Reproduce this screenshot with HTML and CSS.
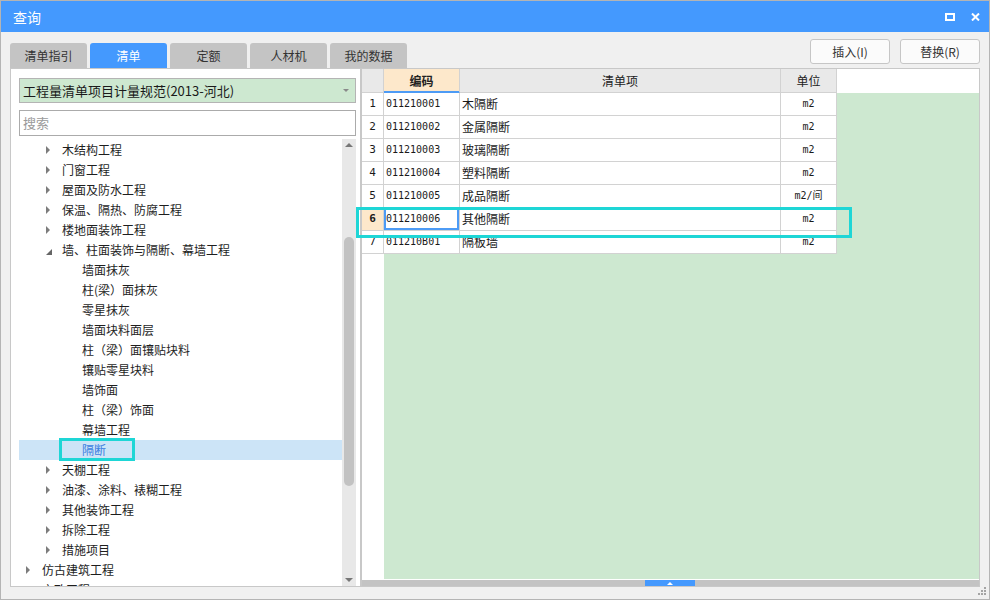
FILE: index.html
```html
<!DOCTYPE html>
<html lang="zh-CN">
<head>
<meta charset="utf-8">
<title>查询</title>
<link rel="stylesheet" href="styles.css">
</head>
<body>
<div class="window">
  <div class="titlebar">
    <span class="title">查询</span>
    <div class="title-icons">
      <svg width="10" height="8" viewBox="0 0 10 8"><rect x="1" y="1" width="8" height="6" fill="none" stroke="#fff" stroke-width="2"/></svg>
      <svg width="9" height="8" viewBox="0 0 9 8"><path d="M1 0.5L8 7.5M8 0.5L1 7.5" stroke="#fff" stroke-width="2"/></svg>
    </div>
  </div>
  <div class="content">
    <div class="toolbar">
      <div class="tabs">
        <div class="tab">清单指引</div>
        <div class="tab active">清单</div>
        <div class="tab">定额</div>
        <div class="tab">人材机</div>
        <div class="tab">我的数据</div>
      </div>
      <div class="actions">
        <button class="btn">插入(I)</button>
        <button class="btn">替换(R)</button>
      </div>
    </div>
    <div class="main">
      <div class="left-panel">
        <div class="select"><span>工程量清单项目计量规范(2013-河北)</span><i class="caret"></i></div>
        <div class="search">搜索</div>
        <div class="tree">
          <ul class="tree-list">
            <li class="node d1"><span class="arw"><i class="tri"></i></span><span>木结构工程</span></li>
            <li class="node d1"><span class="arw"><i class="tri"></i></span><span>门窗工程</span></li>
            <li class="node d1"><span class="arw"><i class="tri"></i></span><span>屋面及防水工程</span></li>
            <li class="node d1"><span class="arw"><i class="tri"></i></span><span>保温、隔热、防腐工程</span></li>
            <li class="node d1"><span class="arw"><i class="tri"></i></span><span>楼地面装饰工程</span></li>
            <li class="node d1"><span class="arw"><i class="tri open"></i></span><span>墙、柱面装饰与隔断、幕墙工程</span></li>
            <li class="node d2"><span class="arw"></span><span>墙面抹灰</span></li>
            <li class="node d2"><span class="arw"></span><span>柱(梁）面抹灰</span></li>
            <li class="node d2"><span class="arw"></span><span>零星抹灰</span></li>
            <li class="node d2"><span class="arw"></span><span>墙面块料面层</span></li>
            <li class="node d2"><span class="arw"></span><span>柱（梁）面镶贴块料</span></li>
            <li class="node d2"><span class="arw"></span><span>镶贴零星块料</span></li>
            <li class="node d2"><span class="arw"></span><span>墙饰面</span></li>
            <li class="node d2"><span class="arw"></span><span>柱（梁）饰面</span></li>
            <li class="node d2"><span class="arw"></span><span>幕墙工程</span></li>
            <li class="node d2 selected"><span class="arw"></span><span>隔断</span></li>
            <li class="node d1"><span class="arw"><i class="tri"></i></span><span>天棚工程</span></li>
            <li class="node d1"><span class="arw"><i class="tri"></i></span><span>油漆、涂料、裱糊工程</span></li>
            <li class="node d1"><span class="arw"><i class="tri"></i></span><span>其他装饰工程</span></li>
            <li class="node d1"><span class="arw"><i class="tri"></i></span><span>拆除工程</span></li>
            <li class="node d1"><span class="arw"><i class="tri"></i></span><span>措施项目</span></li>
            <li class="node d0"><span class="arw"><i class="tri"></i></span><span>仿古建筑工程</span></li>
            <li class="node d0"><span class="arw"><i class="tri"></i></span><span>市政工程</span></li>
          </ul>
          <div class="vscroll">
            <div class="sbtn"><i class="up"></i></div>
            <div class="thumb"></div>
            <div class="sbtn bottom"><i class="down"></i></div>
          </div>
        </div>
      </div>
      <div class="grid-panel">
        <div class="sheet">
          <div class="row head">
            <div class="c num"></div>
            <div class="c code">编码</div>
            <div class="c name">清单项</div>
            <div class="c unit">单位</div>
          </div>
          <div class="row"><div class="c num">1</div><div class="c code">011210001</div><div class="c name">木隔断</div><div class="c unit">m2</div></div>
          <div class="row"><div class="c num">2</div><div class="c code">011210002</div><div class="c name">金属隔断</div><div class="c unit">m2</div></div>
          <div class="row"><div class="c num">3</div><div class="c code">011210003</div><div class="c name">玻璃隔断</div><div class="c unit">m2</div></div>
          <div class="row"><div class="c num">4</div><div class="c code">011210004</div><div class="c name">塑料隔断</div><div class="c unit">m2</div></div>
          <div class="row"><div class="c num">5</div><div class="c code">011210005</div><div class="c name">成品隔断</div><div class="c unit">m2/间</div></div>
          <div class="row current"><div class="c num">6</div><div class="c code">011210006</div><div class="c name">其他隔断</div><div class="c unit">m2</div></div>
          <div class="row"><div class="c num">7</div><div class="c code">011210B01</div><div class="c name">隔板墙</div><div class="c unit">m2</div></div>
        </div>
        <div class="hscroll"><div class="hthumb"><i class="hup"></i></div></div>
      </div>
    </div>
    <div class="statusbar">
      <svg class="grip" width="8" height="8" viewBox="0 0 8 8">
        <rect x="6" y="0" width="2" height="2" fill="#a4a4a4"/>
        <rect x="3" y="3" width="2" height="2" fill="#a4a4a4"/>
        <rect x="6" y="3" width="2" height="2" fill="#a4a4a4"/>
        <rect x="0" y="6" width="2" height="2" fill="#a4a4a4"/>
        <rect x="3" y="6" width="2" height="2" fill="#a4a4a4"/>
        <rect x="6" y="6" width="2" height="2" fill="#a4a4a4"/>
      </svg>
    </div>
  </div>
  <div class="hl hl-tree"></div>
  <div class="hl hl-row"></div>
</div>
</body>
</html>
```

FILE: styles.css
```css
* { box-sizing: border-box; }
html, body { margin: 0; padding: 0; }
body {
  width: 990px;
  height: 600px;
  overflow: hidden;
  font-family: "Noto Sans CJK SC", sans-serif;
  font-size: 12px;
  color: #1e1e1e;
  background: #f0f0f0;
}
.window {
  position: relative;
  width: 990px;
  height: 600px;
  border: 1px solid #b4b4b4;
  background: #f0f0f0;
  display: flex;
  flex-direction: column;
}
.titlebar {
  height: 31px;
  flex: none;
  background: #4499fe;
  color: #fff;
  display: flex;
  align-items: center;
  justify-content: space-between;
  padding: 0 9px 0 12px;
}
.title { font-size: 14px; line-height: 20px; }
.title-icons { display: flex; align-items: center; gap: 16px; }
.title-icons svg { display: block; }

.content {
  flex: 1;
  display: flex;
  flex-direction: column;
  padding: 0 9px;
}
.toolbar {
  height: 36px;
  flex: none;
  display: flex;
  justify-content: space-between;
}
.tabs { display: flex; gap: 3px; align-self: flex-end; }
.tab {
  width: 77px;
  height: 25px;
  line-height: 25px;
  text-align: center;
  background: #c4c4c4;
  border-radius: 3px 3px 0 0;
  color: #333;
  font-size: 12px;
}
.tab.active { background: #4499fe; color: #fff; }
.actions { display: flex; gap: 10px; margin-top: 7px; align-self: flex-start; }
.btn {
  width: 80px;
  height: 25px;
  border: 1px solid #c6c6c6;
  border-radius: 3px;
  background: #fbfbfb;
  font-family: "Noto Sans CJK SC", sans-serif;
  font-size: 12px;
  line-height: 23px;
  color: #333;
  padding: 0;
}

.main { height: 519px; flex: none; display: flex; }

.left-panel {
  width: 351px;
  flex: none;
  border: 1px solid #c8c8c8;
  background: #fff;
  display: flex;
  flex-direction: column;
  padding: 9px 4px 0 8px;
}
.select {
  height: 25px;
  flex: none;
  border: 1px solid #b4b4b4;
  background: #cde8d0;
  display: flex;
  align-items: center;
  justify-content: space-between;
  padding: 0 6px 0 3px;
  font-size: 13px;
  line-height: 20px;
  color: #1a1a1a;
}
.caret {
  width: 0; height: 0;
  border-top: 3px solid #8a8a8a;
  border-left: 3px solid transparent;
  border-right: 3px solid transparent;
}
.search {
  height: 26px;
  flex: none;
  margin-top: 7px;
  border: 1px solid #ababab;
  background: #fff;
  padding-left: 3px;
  font-size: 13px;
  line-height: 24px;
  color: #9a9a9a;
}
.tree {
  flex: 1;
  min-height: 0;
  margin-top: 3px;
  display: flex;
}
.tree-list {
  flex: 1;
  list-style: none;
  margin: 0;
  padding: 1px 0 0 0;
  overflow: hidden;
}
.node {
  height: 20px;
  display: flex;
  align-items: center;
  font-size: 12px;
  line-height: 20px;
  color: #1e1e1e;
  white-space: nowrap;
}
.node.d0 { padding-left: 4px; }
.node.d1 { padding-left: 24px; }
.node.d2 { padding-left: 44px; }
.node.selected { background: #cce4f7; color: #3a7de0; }
.arw {
  width: 19px;
  flex: none;
  display: flex;
  align-items: center;
  padding-left: 3px;
}
.tri {
  width: 0; height: 0;
  border-left: 4px solid #7c7c7c;
  border-top: 4px solid transparent;
  border-bottom: 4px solid transparent;
}
.tri.open {
  border-top: none;
  border-left: 6px solid transparent;
  border-bottom: 6px solid #666;
  margin-top: 4px;
}
.vscroll {
  width: 14px;
  flex: none;
  background: #e8e8e8;
  display: flex;
  flex-direction: column;
  align-items: center;
}
.sbtn {
  height: 12px;
  width: 100%;
  flex: none;
  display: flex;
  align-items: center;
  justify-content: center;
}
.sbtn.bottom { margin-top: auto; }
.up {
  width: 0; height: 0;
  border-bottom: 4px solid #777;
  border-left: 4px solid transparent;
  border-right: 4px solid transparent;
}
.down {
  width: 0; height: 0;
  border-top: 4px solid #777;
  border-left: 4px solid transparent;
  border-right: 4px solid transparent;
}
.thumb {
  width: 10px;
  height: 249px;
  flex: none;
  margin-top: 86px;
  border-radius: 5px;
  background: #c2c2c2;
}

.grid-panel {
  flex: 1;
  border: 1px solid #c8c8c8;
  background: #fff;
  display: flex;
  flex-direction: column;
}
.sheet {
  height: 510px;
  flex: none;
  background:
    linear-gradient(#cde8d0, #cde8d0) 22px 24px / calc(100% - 22px) calc(100% - 24px) no-repeat,
    #fff;
}
.row {
  display: grid;
  grid-template-columns: 22px 76px 321px 56px;
  width: 475px;
}
.c {
  height: 23px;
  border-right: 1px solid #d2d2d2;
  border-bottom: 1px solid #d2d2d2;
  background: #fff;
  white-space: nowrap;
  overflow: hidden;
  font-family: "DejaVu Sans Mono", "Noto Sans CJK SC", monospace;
  font-size: 10px;
  line-height: 22px;
  color: #1a1a1a;
}
.c.num { text-align: center; font-size: 11px; }
.c.code { padding-left: 2px; }
.c.name {
  padding-left: 2px;
  font-family: "Noto Sans CJK SC", sans-serif;
  font-size: 12px;
}
.c.unit { text-align: center; }
.row.head .c {
  height: 24px;
  line-height: 23px;
  background: #e9e9e9;
  font-family: "Noto Sans CJK SC", sans-serif;
  font-size: 12px;
  text-align: center;
  padding-left: 0;
  color: #222;
}
.row.head .c.code {
  background: #fde8cb;
  font-weight: bold;
  border-bottom-color: #4d9bf5;
  box-shadow: inset 0 -1px 0 #4d9bf5;
}
.row.current .c.num { background: #fde8cb; font-weight: bold; }
.row.current .c.code { box-shadow: inset 0 0 0 2px #4d9bf5; }

.hscroll {
  height: 6px;
  flex: none;
  margin-top: 1px;
  background: #c3c3c3;
  padding-left: 283px;
}
.hthumb {
  width: 50px;
  height: 6px;
  background: #4499fe;
  display: flex;
  align-items: center;
  justify-content: center;
}
.hup {
  width: 0; height: 0;
  border-bottom: 3px solid #fff;
  border-left: 3px solid transparent;
  border-right: 3px solid transparent;
}

.statusbar {
  flex: 1;
  display: flex;
  justify-content: flex-end;
  align-items: flex-start;
}
.grip { display: block; margin-right: -6px; }

.hl {
  position: absolute;
  border: 3px solid #1ed6d6;
}
.hl-tree { left: 58px; top: 437px; width: 76px; height: 23px; }
.hl-row { left: 355px; top: 206px; width: 496px; height: 31px; }
```
